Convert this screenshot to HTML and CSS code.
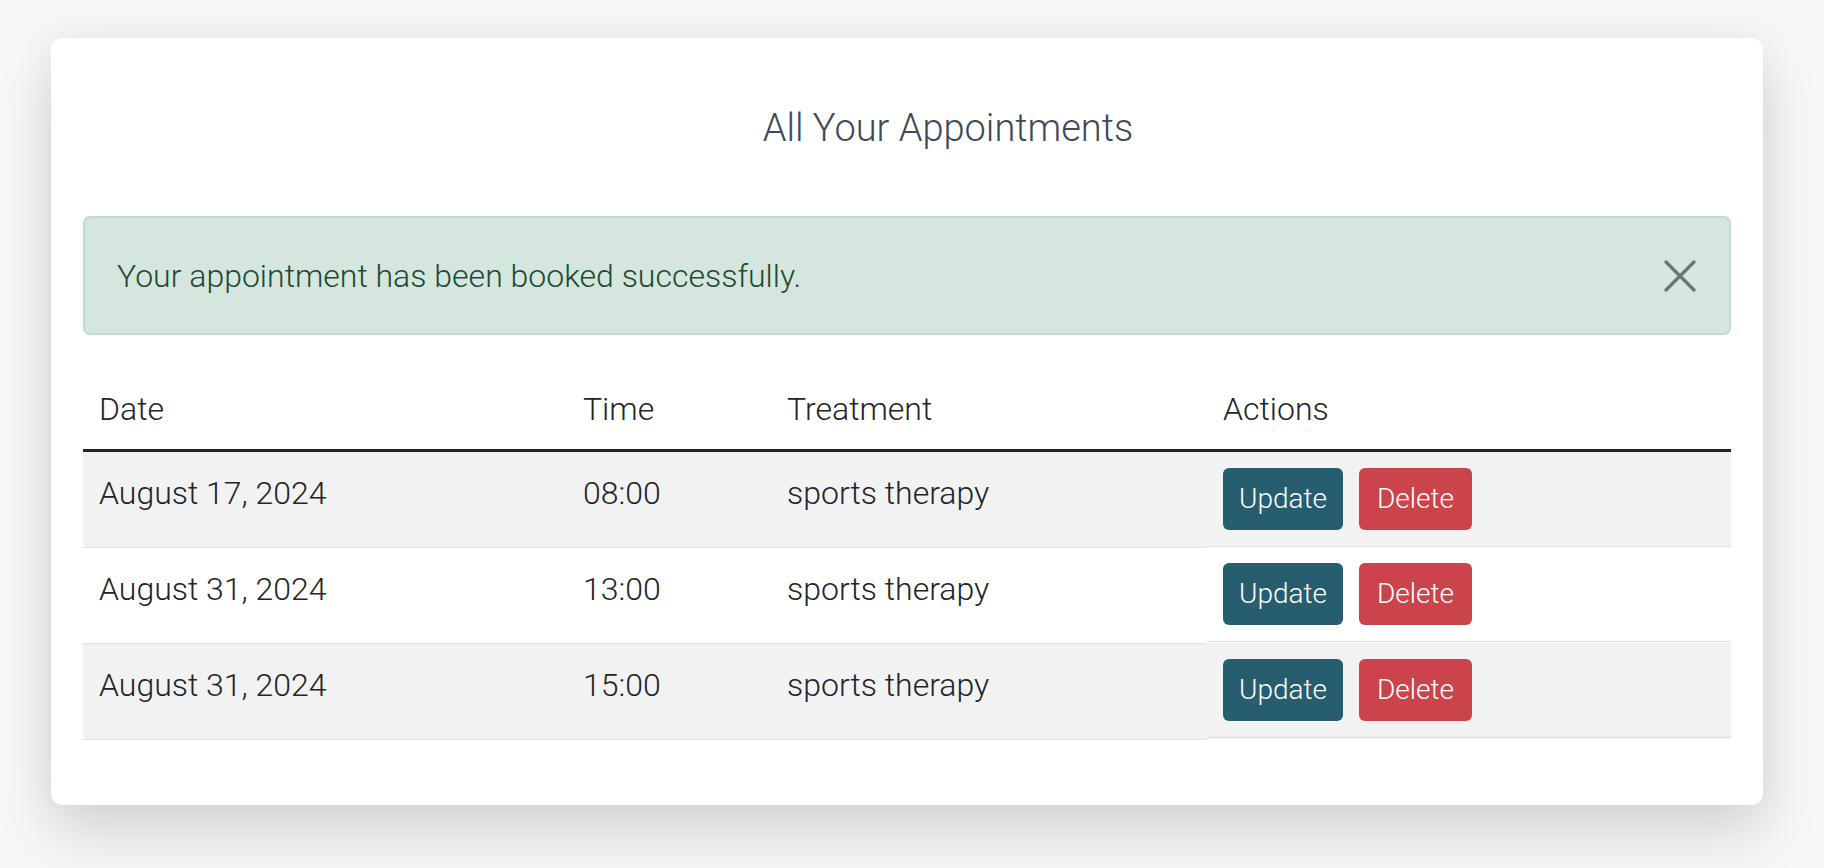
FILE: index.html
```html
<!DOCTYPE html>
<html lang="en">
<head>
<meta charset="utf-8">
<title>All Your Appointments</title>
<link rel="stylesheet" href="styles.css">
</head>
<body>
<main class="card">
  <h2 class="title">All Your Appointments</h2>
  <div class="alert">
    <span class="alert-text">Your appointment has been booked successfully.</span>
    <button class="close" aria-label="Close">
      <svg width="32" height="32" viewBox="0 0 32 32"><path d="M2 2 L30 30 M30 2 L2 30" stroke="currentColor" stroke-width="3.2" stroke-linecap="round" fill="none"/></svg>
    </button>
  </div>
  <table class="appts">
    <colgroup>
      <col class="c-date"><col class="c-time"><col class="c-treat"><col class="c-act">
    </colgroup>
    <thead>
      <tr><th>Date</th><th>Time</th><th>Treatment</th><th>Actions</th></tr>
    </thead>
    <tbody>
      <tr class="odd">
        <td>August 17, 2024</td><td>08:00</td><td>sports therapy</td>
        <td class="actions"><button class="btn btn-update">Update</button><button class="btn btn-delete">Delete</button></td>
      </tr>
      <tr>
        <td>August 31, 2024</td><td>13:00</td><td>sports therapy</td>
        <td class="actions"><button class="btn btn-update">Update</button><button class="btn btn-delete">Delete</button></td>
      </tr>
      <tr class="odd">
        <td>August 31, 2024</td><td>15:00</td><td>sports therapy</td>
        <td class="actions"><button class="btn btn-update">Update</button><button class="btn btn-delete">Delete</button></td>
      </tr>
    </tbody>
  </table>
</main>
</body>
</html>
```
FILE: styles.css
```css
* { box-sizing: border-box; }
html, body { margin: 0; padding: 0; }
body {
  background: #f7f7f6;
  font-family: Roboto, "Liberation Sans", sans-serif;
  font-weight: 300;
  color: #212529;
  width: 1824px;
  height: 868px;
  overflow: hidden;
  padding: 38px 61px 0 51px;
}
.card {
  background: #fff;
  border-radius: 12px;
  box-shadow: 0 30px 60px rgba(0,0,0,0.13), 0 0 40px rgba(0,0,0,0.06);
  padding: 0 32px 65px;
  height: 767px;
}
.title {
  margin: 0;
  padding: 66px 0 0 82px;
  height: 178px;
  text-align: center;
  font-size: 38px;
  font-weight: 300;
  line-height: 48px;
  color: #3e4a5a;
}
.alert {
  display: flex;
  align-items: center;
  justify-content: space-between;
  height: 119px;
  padding: 0 32px 0 32px;
  background: #d4e6de;
  border: 2px solid #bfdcd0;
  border-radius: 7px;
  color: #1d4a30;
  font-size: 32px;
  line-height: 48px;
}
.close {
  border: 0;
  background: none;
  padding: 0;
  width: 32px;
  height: 32px;
  color: #6b7772;
  display: flex;
  margin-right: 1px;
}
.appts {
  margin-top: 34px;
  width: 100%;
  border-collapse: collapse;
  table-layout: fixed;
  font-size: 32px;
  line-height: 48px;
}
.c-date { width: 484px; }
.c-time { width: 204px; }
.c-treat { width: 436px; }
.appts th {
  text-align: left;
  font-weight: 300;
  padding: 16px 16px 16px 16px;
  border-bottom: 3px solid #212529;
}
.appts td {
  padding: 17px 16px 15px 16px;
  vertical-align: top;
  border-bottom: 1px solid #dee2e6;
}
.appts tbody tr { height: 96px; }
.appts tr.odd { background: #f2f2f2; }
.appts td.actions {
  display: flex;
  gap: 16px;
  padding: 16px 16px 16px 16px;
}
.btn {
  height: 62px;
  border: 0;
  border-radius: 6px;
  color: #fff;
  font-family: Roboto, "Liberation Sans", sans-serif;
  font-weight: 300;
  font-size: 28px;
  padding: 0 16px;
  line-height: 62px;
}
.btn-update { background: #265d6f; width: 120px; }
.btn-delete { background: #cc444b; width: 113px; }
```
